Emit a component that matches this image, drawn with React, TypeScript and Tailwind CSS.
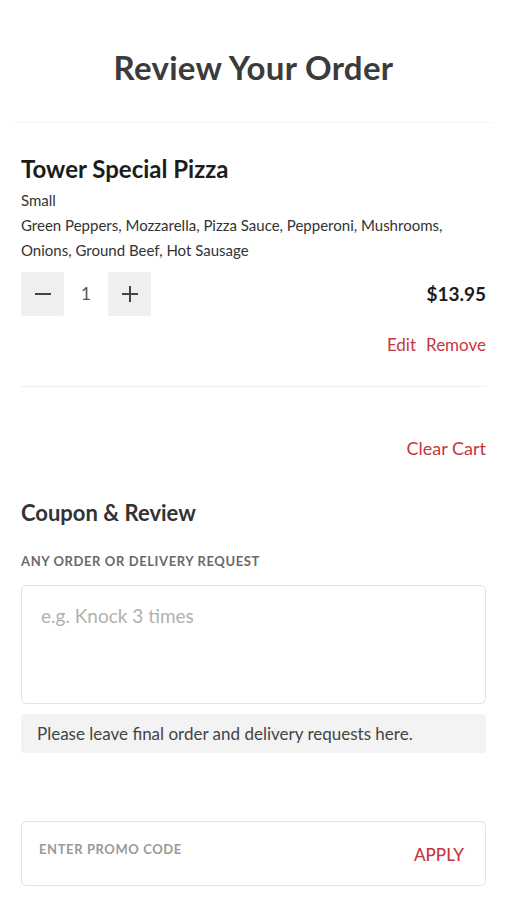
const ITEM = {
  name: "Tower Special Pizza",
  size: "Small",
  toppings: "Green Peppers, Mozzarella, Pizza Sauce, Pepperoni, Mushrooms, Onions, Ground Beef, Hot Sausage",
  qty: 1,
  price: "$13.95",
};

function Minus() {
  return (
    <svg width="18" height="18" viewBox="0 0 18 18" fill="none" stroke="#444" strokeWidth="2">
      <path d="M1 9h16" />
    </svg>
  );
}

function Plus() {
  return (
    <svg width="18" height="18" viewBox="0 0 18 18" fill="none" stroke="#444" strokeWidth="2">
      <path d="M1 9h16M9 1v16" />
    </svg>
  );
}

export default function App() {
  return (
    <div className="min-h-[900px] bg-white font-['Lato','Noto_Sans',sans-serif] text-[#222]">
      <header className="pt-[49px] pb-[37px] text-center">
        <h1 className="text-[33px] leading-[36px] font-bold text-[#3b3b3b] tracking-[0.3px]">Review Your Order</h1>
      </header>
      <div className="mx-[14px] h-px bg-[#f4f4f4]" />

      <div className="px-[21px]">
        <section className="pt-[32px] pb-[30px] border-b border-[#eeeeee]">
          <h2 className="text-[24px] leading-[28px] font-bold text-[#1c1c1c]">{ITEM.name}</h2>
          <p className="mt-[5px] text-[15px] leading-[25px] text-[#333]">{ITEM.size}</p>
          <p className="text-[15px] leading-[25px] text-[#333]">{ITEM.toppings}</p>

          <div className="mt-[9px] flex items-center justify-between">
            <div className="flex items-center">
              <button className="w-[43px] h-[44px] bg-[#efefef] rounded-[2px] flex items-center justify-center">
                <Minus />
              </button>
              <span className="w-[44px] text-center text-[17px] text-[#555]">{ITEM.qty}</span>
              <button className="w-[43px] h-[44px] bg-[#efefef] rounded-[2px] flex items-center justify-center">
                <Plus />
              </button>
            </div>
            <span className="text-[19px] font-bold text-[#1c1c1c]">{ITEM.price}</span>
          </div>

          <div className="mt-[18px] flex justify-end gap-[10px] text-[17px] leading-[22px] text-[#c8353d]">
            <button>Edit</button>
            <button>Remove</button>
          </div>
        </section>

        <div className="pt-[49px] flex justify-end">
          <button className="text-[18px] leading-[24px] text-[#c8353d]">Clear Cart</button>
        </div>

        <section className="pt-[40px]">
          <h3 className="text-[22px] leading-[26px] font-bold text-[#333]">Coupon &amp; Review</h3>
          <p className="mt-[26px] text-[13px] leading-[18px] font-bold uppercase text-[#6a6a6a] tracking-[0.6px]">
            Any order or delivery request
          </p>
          <textarea
            className="mt-[15px] block w-full h-[119px] resize-none rounded-[5px] border border-[#e3e3e3] px-[19px] py-[18px] text-[19px] leading-[24px] text-[#333] placeholder:text-[#b0b0b0] outline-none"
            placeholder="e.g. Knock 3 times"
          />
          <div className="mt-[10px] rounded-[4px] bg-[#f3f3f3] px-[16px] py-[9px] text-[17px] leading-[21px] text-[#444]">
            Please leave final order and delivery requests here.
          </div>
        </section>

        <div className="mt-[68px] h-[65px] rounded-[5px] border border-[#e3e3e3] flex items-start justify-between pl-[17px] pr-[21px]">
          <span className="pt-[18px] text-[13px] font-bold uppercase text-[#9a9a9a] tracking-[0.6px]">Enter promo code</span>
          <button className="pt-[20px] text-[17px] font-medium uppercase text-[#c8353d]">Apply</button>
        </div>
      </div>
    </div>
  );
}
